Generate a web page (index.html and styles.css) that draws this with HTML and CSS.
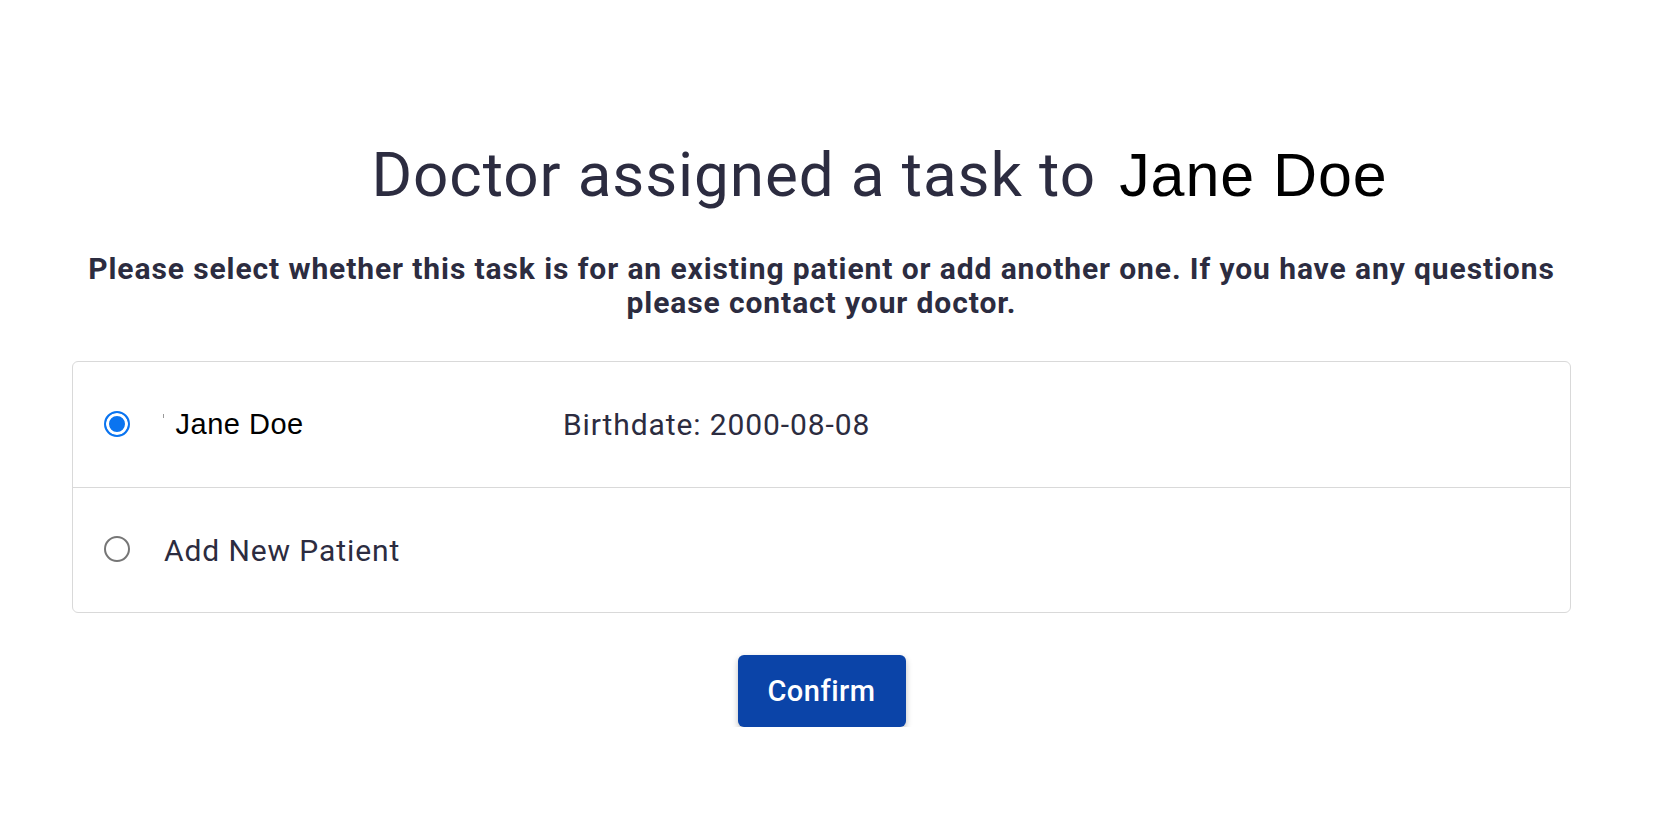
FILE: index.html
```html
<!DOCTYPE html>
<html lang="en">
<head>
<meta charset="utf-8">
<title>Assign task</title>
<link rel="stylesheet" href="styles.css">
</head>
<body>
<main class="page">
  <h1 class="title">Doctor assigned a task to <span class="title-name">Jane Doe</span></h1>
  <p class="lead">Please select whether this task is for an existing patient or add another one. If you have any questions please contact your doctor.</p>
  <div class="card">
    <label class="row">
      <span class="radio radio-on"></span>
      <span class="name"><span class="tick"></span> Jane Doe</span>
      <span class="birth">Birthdate: 2000-08-08</span>
    </label>
    <label class="row">
      <span class="radio"></span>
      <span class="add">Add New Patient</span>
    </label>
  </div>
  <div class="actions">
    <button class="confirm" type="button">Confirm</button>
  </div>
</main>
</body>
</html>
```

FILE: styles.css
```css
* { box-sizing: border-box; }
html, body { margin: 0; padding: 0; background: #fff; }
body {
  font-family: Roboto, "Noto Sans", sans-serif;
  color: #2c2c40;
  letter-spacing: 0.9px;
}
.page {
  padding: 138px 103px 0 72px;
}
.title {
  margin: 0;
  padding-left: 116px;
  text-align: center;
  font-size: 62px;
  line-height: 74px;
  font-weight: 400;
}
.title-name {
  margin-left: 7px;
  font-family: "Liberation Sans", Arial, sans-serif;
  font-size: 61px;
  color: #000;
}
.lead {
  margin: 40px 0 0;
  text-align: center;
  font-size: 30px;
  line-height: 34px;
  font-weight: 700;
}
.card {
  margin-top: 41px;
  border: 1px solid #d9d9d9;
  border-radius: 6px;
}
.row {
  display: flex;
  align-items: center;
  height: 125px;
  padding-left: 31px;
}
.row + .row {
  border-top: 1px solid #d9d9d9;
}
.radio {
  width: 26px;
  height: 26px;
  border-radius: 50%;
  border: 2px solid #767676;
  background: #fff;
  flex: none;
  margin-bottom: 2px;
}
.radio-on {
  border: 2.5px solid #0a74f0;
  background: #0a74f0;
  box-shadow: inset 0 0 0 3px #fff;
}
.name {
  margin-left: 33px;
  width: 400px;
  font-family: "Liberation Sans", Arial, sans-serif;
  font-size: 29px;
  letter-spacing: 0.5px;
  color: #000;
}
.tick {
  display: inline-block;
  width: 1px;
  height: 4px;
  margin-right: 3px;
  background: #9a9a9a;
  vertical-align: 16px;
}
.birth {
  font-size: 30px;
}
.add {
  margin-left: 34px;
  font-size: 30px;
}
.actions {
  display: flex;
  justify-content: center;
  margin-top: 42px;
}
.confirm {
  width: 168px;
  height: 72px;
  border: none;
  border-radius: 6px;
  background: #0b44a8;
  color: #fff;
  font-family: Roboto, sans-serif;
  font-size: 29px;
  font-weight: 500;
  letter-spacing: 0.5px;
  box-shadow: 0 3px 6px rgba(0,0,0,0.25);
}
```
